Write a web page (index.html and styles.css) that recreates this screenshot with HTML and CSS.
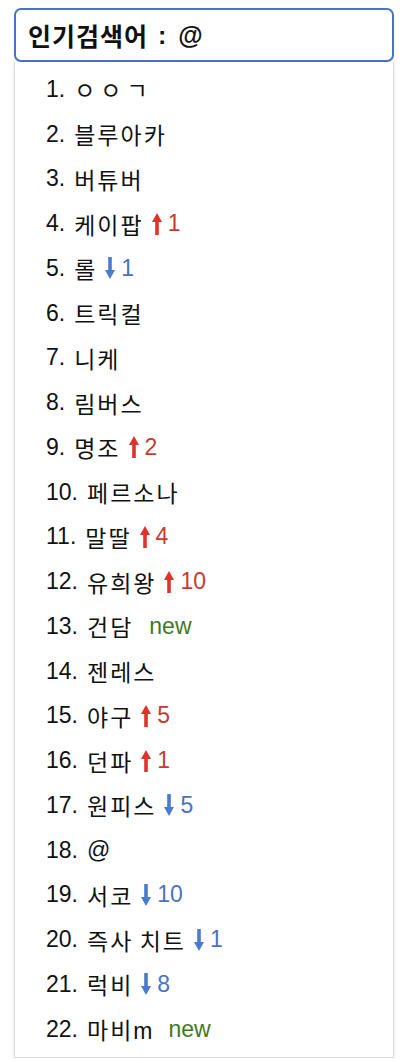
FILE: index.html
```html
<!DOCTYPE html>
<html lang="ko">
<head>
<meta charset="utf-8">
<link rel="stylesheet" href="styles.css">
</head>
<body>
<div class="wrap">
  <div class="search"><span class="ht">인기검색어</span><span class="colon">:</span>@</div>
  <ol class="list">
    <li><span class="n">1.</span><span class="t jamo">ㅇㅇㄱ</span></li>
    <li><span class="n">2.</span><span class="t">블루아카</span></li>
    <li><span class="n">3.</span><span class="t">버튜버</span></li>
    <li><span class="n">4.</span><span class="t">케이팝</span><span class="up"><svg class="ar" viewBox="0 0 10 22"><path d="M5 0 L10 9 L6.8 9 L6.8 22 L3.2 22 L3.2 9 L0 9 Z"/></svg>1</span></li>
    <li><span class="n">5.</span><span class="t">롤</span><span class="down"><svg class="ar" viewBox="0 0 10 22"><path d="M5 22 L10 13 L6.8 13 L6.8 0 L3.2 0 L3.2 13 L0 13 Z"/></svg>1</span></li>
    <li><span class="n">6.</span><span class="t">트릭컬</span></li>
    <li><span class="n">7.</span><span class="t">니케</span></li>
    <li><span class="n">8.</span><span class="t">림버스</span></li>
    <li><span class="n">9.</span><span class="t">명조</span><span class="up"><svg class="ar" viewBox="0 0 10 22"><path d="M5 0 L10 9 L6.8 9 L6.8 22 L3.2 22 L3.2 9 L0 9 Z"/></svg>2</span></li>
    <li><span class="n">10.</span><span class="t">페르소나</span></li>
    <li><span class="n">11.</span><span class="t">말딸</span><span class="up"><svg class="ar" viewBox="0 0 10 22"><path d="M5 0 L10 9 L6.8 9 L6.8 22 L3.2 22 L3.2 9 L0 9 Z"/></svg>4</span></li>
    <li><span class="n">12.</span><span class="t">유희왕</span><span class="up"><svg class="ar" viewBox="0 0 10 22"><path d="M5 0 L10 9 L6.8 9 L6.8 22 L3.2 22 L3.2 9 L0 9 Z"/></svg>10</span></li>
    <li><span class="n">13.</span><span class="t">건담</span><span class="new">new</span></li>
    <li><span class="n">14.</span><span class="t">젠레스</span></li>
    <li><span class="n">15.</span><span class="t">야구</span><span class="up"><svg class="ar" viewBox="0 0 10 22"><path d="M5 0 L10 9 L6.8 9 L6.8 22 L3.2 22 L3.2 9 L0 9 Z"/></svg>5</span></li>
    <li><span class="n">16.</span><span class="t">던파</span><span class="up"><svg class="ar" viewBox="0 0 10 22"><path d="M5 0 L10 9 L6.8 9 L6.8 22 L3.2 22 L3.2 9 L0 9 Z"/></svg>1</span></li>
    <li><span class="n">17.</span><span class="t">원피스</span><span class="down"><svg class="ar" viewBox="0 0 10 22"><path d="M5 22 L10 13 L6.8 13 L6.8 0 L3.2 0 L3.2 13 L0 13 Z"/></svg>5</span></li>
    <li><span class="n">18.</span><span class="t">@</span></li>
    <li><span class="n">19.</span><span class="t">서코</span><span class="down"><svg class="ar" viewBox="0 0 10 22"><path d="M5 22 L10 13 L6.8 13 L6.8 0 L3.2 0 L3.2 13 L0 13 Z"/></svg>10</span></li>
    <li><span class="n">20.</span><span class="t">즉사<span class="sp"> </span>치트</span><span class="down"><svg class="ar" viewBox="0 0 10 22"><path d="M5 22 L10 13 L6.8 13 L6.8 0 L3.2 0 L3.2 13 L0 13 Z"/></svg>1</span></li>
    <li><span class="n">21.</span><span class="t">럭비</span><span class="down"><svg class="ar" viewBox="0 0 10 22"><path d="M5 22 L10 13 L6.8 13 L6.8 0 L3.2 0 L3.2 13 L0 13 Z"/></svg>8</span></li>
    <li><span class="n">22.</span><span class="t">마비<span class="lat">m</span></span><span class="new">new</span></li>
  </ol>
</div>
</body>
</html>
```
FILE: styles.css
```css
html, body {
  margin: 0;
  padding: 0;
  background: #ffffff;
}
body {
  font-family: "Liberation Sans", "Noto Sans CJK KR", sans-serif;
  color: #000;
}
.wrap {
  padding: 8px 18px 0 14px;
}
.search {
  box-sizing: border-box;
  height: 54px;
  border: 2px solid #4a72c6;
  border-radius: 7px;
  padding: 0 0 0 12px;
  display: flex;
  align-items: center;
  font-size: 25px;
  font-weight: bold;
  color: #111;
}
.ht {
  letter-spacing: 1px;
}
.colon {
  margin: 0 12px 0 10px;
}
.list {
  list-style: none;
  margin: 0;
  padding: 5px 0 5px 31px;
  border: 1px solid #dcdcdc;
  border-top: none;
  box-shadow: 0 1px 3px rgba(0,0,0,0.12);
}
.list li {
  height: 44.76px;
  display: flex;
  align-items: center;
  font-size: 23px;
  white-space: pre;
  color: #111;
}
.t {
  margin-left: 9px;
  letter-spacing: 2px;
}
.jamo {
  letter-spacing: 5px;
}
.sp {
  letter-spacing: 0;
}
.lat {
  letter-spacing: 0;
}
.up, .down {
  display: inline-flex;
  align-items: center;
  margin-left: 8px;
}
.up { color: #c83a2e; }
.down { color: #4a72c4; }
.ar {
  width: 10px;
  height: 22px;
  margin-right: 6px;
}
.up .ar { fill: #dd3328; }
.down .ar { fill: #4a7bd0; }
.new {
  color: #3f7a22;
  margin-left: 16px;
}
```
